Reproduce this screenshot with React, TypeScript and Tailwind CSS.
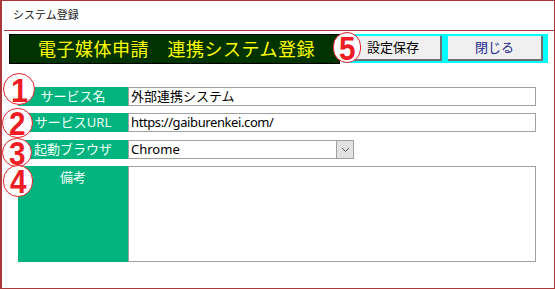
import React from "react";

const jp = "font-['Noto_Sans','Noto_Sans_CJK_JP',sans-serif]";

function Marker({ n, className }: { n: string; className: string }) {
  return (
    <div
      className={`absolute flex items-center justify-center rounded-full border border-[#e8232b] bg-white text-[#ee1c25] font-bold font-['Liberation_Sans',sans-serif] ${className}`}
    >
      <span className="block h-[24px] leading-[24px] scale-x-90 translate-y-[1px]">{n}</span>
    </div>
  );
}

function Label({ text, tall }: { text: string; tall?: boolean }) {
  return (
    <div
      className={`w-[110px] shrink-0 bg-[#00b37f] text-[#f0fff8] text-[13px] flex justify-center ${
        tall ? "items-start pt-[2px]" : "items-center"
      }`}
    >
      {text}
    </div>
  );
}

export default function App() {
  return (
    <div className={`relative w-[555px] h-[289px] bg-white border border-l-2 border-[#a8383a] ${jp}`}>
      <div className="h-[29px] pl-[11px] flex items-center text-[11px] text-[#222]">システム登録</div>
      <div className="ml-[2px] h-px bg-[#a8383a]" />

      <div className="flex mt-[3px] ml-[7px]">
        <div className="w-[331px] h-[30px] bg-[#003300] border border-black flex items-center pl-[28px] text-[18px] text-[#ffff00] tracking-[0.5px]">
          電子媒体申請　連携システム登録
        </div>
        <div className="ml-[3px] w-[205px] h-[29px] bg-[#00ffff] flex items-start pt-[2px] pl-[3px] gap-[6px]">
          <button className="w-[96px] h-[25px] bg-[#f0f0f0] border-r-2 border-b-2 border-[#707070] text-[13px] text-black">
            設定保存
          </button>
          <button className="w-[95px] h-[25px] bg-[#f0f0f0] border-r-2 border-b-2 border-[#707070] text-[13px] text-[#1f2a8a]">
            閉じる
          </button>
        </div>
      </div>

      <div className="ml-[16px] mt-[23px] w-[518px] flex flex-col">
        <div className="flex h-[19px]">
          <Label text="サービス名" />
          <div className="flex-1 border border-[#a0a0a0] flex items-center pl-[2px] text-[13px] text-black">外部連携システム</div>
        </div>
        <div className="flex h-[19px] mt-[7px]">
          <Label text="サービスURL" />
          <div className="flex-1 border border-[#a0a0a0] flex items-center pl-[2px] text-[13px] tracking-[-0.4px] text-black">https://gaiburenkei.com/</div>
        </div>
        <div className="flex h-[19px] mt-[8px]">
          <Label text="起動ブラウザ" />
          <div className="w-[226px] border border-[#a0a0a0] flex items-center text-[13px] text-black">
            <span className="flex-1 pl-[2px]">Chrome</span>
            <div className="w-[17px] h-full bg-[#e1e1e1] border-l border-[#a0a0a0] flex items-center justify-center">
              <svg width="9" height="6" viewBox="0 0 9 6">
                <path d="M1 1l3.5 3.5L8 1" fill="none" stroke="#555" strokeWidth="1" />
              </svg>
            </div>
          </div>
        </div>
        <div className="flex h-[96px] mt-[7px]">
          <Label text="備考" tall />
          <div className="flex-1 border border-[#a0a0a0]" />
        </div>
      </div>

      <Marker n="1" className="left-[1px] top-[72px] w-[32px] h-[32px] text-[34px]" />
      <Marker n="2" className="left-[0px] top-[107px] w-[31px] h-[30px] text-[33px]" />
      <Marker n="3" className="left-[0px] top-[137px] w-[30px] h-[29px] text-[33px]" />
      <Marker n="4" className="left-[1px] top-[164px] w-[30px] h-[32px] text-[33px]" />
      <Marker n="5" className="left-[331px] top-[31px] w-[28px] h-[31px] text-[33px]" />
    </div>
  );
}
